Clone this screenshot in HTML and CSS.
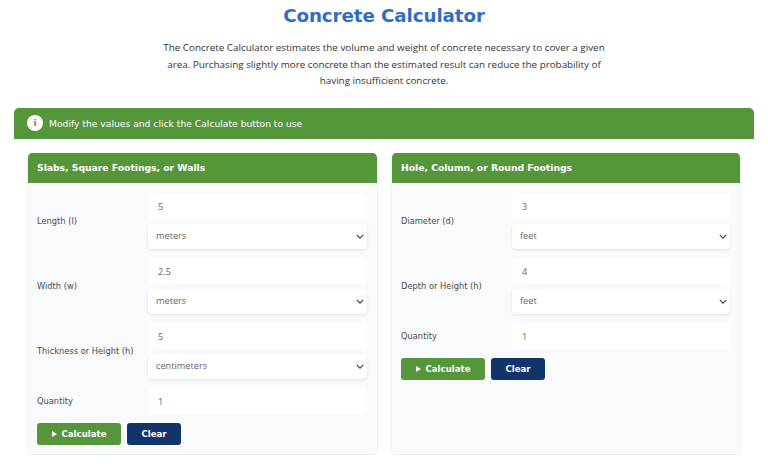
FILE: index.html
```html
<!DOCTYPE html>
<html lang="en">
<head>
<meta charset="utf-8">
<title>Concrete Calculator</title>
<link rel="stylesheet" href="styles.css">
</head>
<body>
<main class="page">
  <h1 class="title">Concrete Calculator</h1>
  <p class="intro">The Concrete Calculator estimates the volume and weight of concrete necessary to cover a given area. Purchasing slightly more concrete than the estimated result can reduce the probability of having insufficient concrete.</p>
  <section class="panel">
    <div class="notice">
      <span class="notice-icon">i</span>
      <span class="notice-text">Modify the values and click the Calculate button to use</span>
    </div>
    <div class="cards">
      <form class="card">
        <h2 class="card-head">Slabs, Square Footings, or Walls</h2>
        <div class="card-body">
          <div class="row">
            <label class="label">Length (l)</label>
            <div class="fields">
              <input class="input" value="5">
              <div class="select-wrap">
                <select class="select"><option>meters</option></select>
                <svg class="chev" viewBox="0 0 10 6"><path d="M1 1l4 4 4-4"/></svg>
              </div>
            </div>
          </div>
          <div class="row">
            <label class="label">Width (w)</label>
            <div class="fields">
              <input class="input" value="2.5">
              <div class="select-wrap">
                <select class="select"><option>meters</option></select>
                <svg class="chev" viewBox="0 0 10 6"><path d="M1 1l4 4 4-4"/></svg>
              </div>
            </div>
          </div>
          <div class="row">
            <label class="label">Thickness or Height (h)</label>
            <div class="fields">
              <input class="input" value="5">
              <div class="select-wrap">
                <select class="select"><option>centimeters</option></select>
                <svg class="chev" viewBox="0 0 10 6"><path d="M1 1l4 4 4-4"/></svg>
              </div>
            </div>
          </div>
          <div class="row">
            <label class="label">Quantity</label>
            <div class="fields">
              <input class="input" value="1">
            </div>
          </div>
          <div class="actions">
            <button type="button" class="btn btn-go"><span class="play"></span>Calculate</button>
            <button type="button" class="btn btn-clear">Clear</button>
          </div>
        </div>
      </form>
      <form class="card">
        <h2 class="card-head">Hole, Column, or Round Footings</h2>
        <div class="card-body">
          <div class="row">
            <label class="label">Diameter (d)</label>
            <div class="fields">
              <input class="input" value="3">
              <div class="select-wrap">
                <select class="select"><option>feet</option></select>
                <svg class="chev" viewBox="0 0 10 6"><path d="M1 1l4 4 4-4"/></svg>
              </div>
            </div>
          </div>
          <div class="row">
            <label class="label">Depth or Height (h)</label>
            <div class="fields">
              <input class="input" value="4">
              <div class="select-wrap">
                <select class="select"><option>feet</option></select>
                <svg class="chev" viewBox="0 0 10 6"><path d="M1 1l4 4 4-4"/></svg>
              </div>
            </div>
          </div>
          <div class="row">
            <label class="label">Quantity</label>
            <div class="fields">
              <input class="input" value="1">
            </div>
          </div>
          <div class="actions">
            <button type="button" class="btn btn-go"><span class="play"></span>Calculate</button>
            <button type="button" class="btn btn-clear">Clear</button>
          </div>
        </div>
      </form>
    </div>
  </section>
</main>
</body>
</html>
```
FILE: styles.css
```css
* { box-sizing: border-box; }
html, body { margin: 0; height: 466px; overflow: hidden; background: #fff; }
body { font-family: "Open Sans", "Liberation Sans", sans-serif; color: #3d3d3d; }
.page { padding: 0 14px; }
.title {
  margin: 0;
  height: 32px;
  line-height: 32px;
  text-align: center;
  font-family: "DejaVu Sans", "Liberation Sans", sans-serif;
  font-size: 18.3px;
  font-weight: 700;
  letter-spacing: -0.1px;
  color: #2f6fc1;
}
.intro {
  width: 460px;
  margin: 7px auto 0;
  text-align: center;
  font-size: 9.85px;
  line-height: 16.6px;
  color: #333;
}
.panel { margin-top: 19px; }
.notice {
  height: 31px;
  display: flex;
  align-items: center;
  gap: 6px;
  padding-left: 13px;
  background: #55963a;
  border-radius: 5px 5px 0 0;
  color: #fff;
  font-family: "DejaVu Sans", "Liberation Sans", sans-serif;
  font-size: 9.2px;
}
.notice-text { padding-top: 1px; }
.notice-icon {
  width: 16px;
  height: 16px;
  border-radius: 50%;
  background: #fff;
  color: #55963a;
  font-size: 9px;
  font-weight: 700;
  line-height: 16px;
  text-align: center;
}
.cards {
  display: grid;
  grid-template-columns: 351px 350px;
  gap: 13px;
  padding: 14px 13px 0;
}
.card {
  height: 302px;
  background: #f8fafb;
  border: 1px solid #eff2f4;
  border-top: 0;
  border-radius: 5px;
  overflow: hidden;
}
.card-head {
  margin: 0 -1px;
  height: 30px;
  padding-left: 10px;
  line-height: 30px;
  background: #55963a;
  color: #fff;
  font-family: "DejaVu Sans", "Liberation Sans", sans-serif;
  font-size: 9.3px;
  font-weight: 700;
  letter-spacing: -0.05px;
}
.card-body {
  display: flex;
  flex-direction: column;
  gap: 9px;
  padding: 10px 10px 0 9px;
}
.row {
  display: grid;
  grid-template-columns: 111px 1fr;
  align-items: center;
}
.label {
  padding-top: 1px;
  font-family: "DejaVu Sans", "Liberation Sans", sans-serif;
  font-size: 8.3px;
  color: #4a4a4a;
}
.fields {
  display: flex;
  flex-direction: column;
  gap: 5px;
}
.input, .select {
  display: block;
  width: 100%;
  border: 0;
  outline: 0;
  background: #fff;
  border-radius: 4px;
  color: #666;
  font-family: "Open Sans", "Liberation Sans", sans-serif;
  font-size: 9.2px;
}
.input {
  height: 26px;
  padding: 1px 10px 0;
  box-shadow: 0 0 2px rgba(0, 0, 0, 0.02);
}
.select-wrap { position: relative; }
.select {
  height: 25px;
  padding: 0 8px 1px;
  appearance: none;
  box-shadow: 0 1px 3px rgba(0, 0, 0, 0.1);
}
.chev {
  position: absolute;
  right: 3px;
  top: 10px;
  width: 8px;
  height: 5px;
  fill: none;
  stroke: #444;
  stroke-width: 1.5;
}
.actions {
  display: flex;
  gap: 6px;
}
.btn {
  height: 22px;
  border: 0;
  border-radius: 3px;
  color: #fff;
  font-family: "DejaVu Sans", "Liberation Sans", sans-serif;
  font-size: 8.6px;
  font-weight: 700;
  display: flex;
  align-items: center;
  justify-content: center;
  padding: 0;
}
.btn-go { width: 84px; background: #55963a; gap: 5px; }
.btn-clear { width: 54px; background: #12346b; }
.play {
  width: 0;
  height: 0;
  border-left: 5px solid #fff;
  border-top: 3px solid transparent;
  border-bottom: 3px solid transparent;
}
```
